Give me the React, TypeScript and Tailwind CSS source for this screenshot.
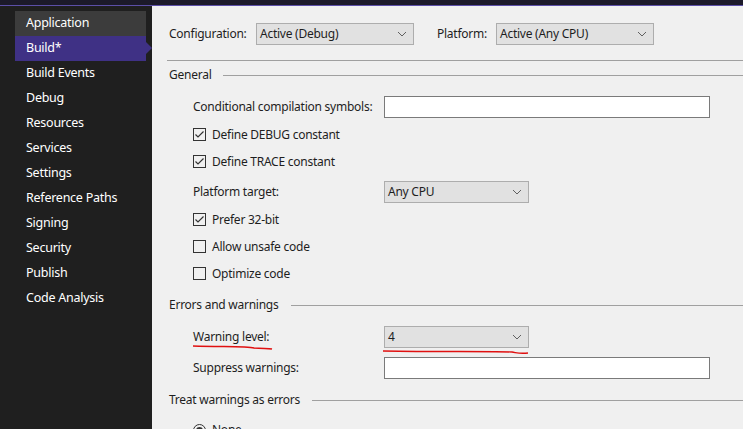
import React from "react";

const navItems = [
  "Application",
  "Build*",
  "Build Events",
  "Debug",
  "Resources",
  "Services",
  "Settings",
  "Reference Paths",
  "Signing",
  "Security",
  "Publish",
  "Code Analysis",
];

const Chevron = () => (
  <svg width="10" height="6" viewBox="0 0 10 6" className="shrink-0">
    <path d="M1 1 L5 5 L9 1" fill="none" stroke="#606060" strokeWidth="1" />
  </svg>
);

const Select = ({ value, width }: { value: string; width: string }) => (
  <div
    className={`flex h-[22px] items-center justify-between border border-[#adadad] bg-[#e1e1e1] pl-[3px] pr-[6px] ${width}`}
  >
    <span>{value}</span>
    <Chevron />
  </div>
);

const CheckBox = ({ checked, label }: { checked?: boolean; label: string }) => (
  <div className="flex h-[27px] items-center">
    <div className="flex h-[13px] w-[13px] items-center justify-center border border-[#333] bg-[#f0f0f0]">
      {checked && (
        <svg width="11" height="11" viewBox="0 0 11 11">
          <path d="M1.5 5.5 L4 8 L9.5 2.5" fill="none" stroke="#333" strokeWidth="1.2" />
        </svg>
      )}
    </div>
    <span className="ml-[6px]">{label}</span>
  </div>
);

const SectionHeader = ({ title }: { title: string }) => (
  <div className="flex h-[26px] items-center">
    <span>{title}</span>
    <div className="ml-[12px] h-px flex-1 bg-[#a0a0a0]" />
  </div>
);

export default function App() {
  return (
    <div
      className="flex h-[429px] w-[743px] flex-col overflow-hidden whitespace-nowrap text-[12px] tracking-[-0.25px]"
      style={{ fontFamily: '"Noto Sans", "Open Sans", sans-serif' }}
    >
      {/* top title strip */}
      <div className="h-[6px] shrink-0 border-b border-[#5c4fa8] bg-[#1c1a2a]" />
      <div className="flex flex-1">
        {/* sidebar */}
        <div className="w-[152px] shrink-0 bg-[#1f1f1f] pl-[15px] pt-[5px] text-[12.5px] text-white">
          {navItems.map((item, i) => (
            <div
              key={item}
              className={`relative flex h-[25px] w-[131px] items-center pl-[11px] ${
                i === 0 ? "bg-[#3c3c3c]" : i === 1 ? "bg-[#3f3185]" : ""
              }`}
            >
              {item}
              {i === 1 && (
                <div className="absolute right-[-6px] top-[6px] h-0 w-0 border-y-[6px] border-l-[6px] border-y-transparent border-l-[#3f3185]" />
              )}
            </div>
          ))}
        </div>

        {/* content */}
        <div className="relative flex-1 bg-[#f0f0f0] pl-[15px] text-[#1e1e1e]">
          <div className="mt-[17px] flex h-[22px] items-center pl-[2px]">
            <span className="w-[87px]">Configuration:</span>
            <Select value="Active (Debug)" width="w-[158px]" />
            <span className="ml-[23px] w-[59px]">Platform:</span>
            <Select value="Active (Any CPU)" width="w-[158px]" />
          </div>
          <div className="mt-[15px] h-px bg-[#a0a0a0]" />

          <div className="pl-[2px]">
            <div className="mt-[1px]">
              <SectionHeader title="General" />
            </div>

            <div className="pl-[24px]">
              <div className="mt-[8px] flex h-[22px] items-center">
                <span className="w-[191px]">Conditional compilation symbols:</span>
                <div className="h-[22px] w-[326px] border border-[#7a7a7a] bg-white" />
              </div>
              <div className="mt-[3px]">
                <CheckBox checked label="Define DEBUG constant" />
                <CheckBox checked label="Define TRACE constant" />
              </div>
              <div className="mt-[6px] flex h-[22px] items-center">
                <span className="w-[191px]">Platform target:</span>
                <Select value="Any CPU" width="w-[145px]" />
              </div>
              <div className="mt-[3px]">
                <CheckBox checked label="Prefer 32-bit" />
                <CheckBox label="Allow unsafe code" />
                <CheckBox label="Optimize code" />
              </div>
            </div>

            <div className="mt-[5px]">
              <SectionHeader title="Errors and warnings" />
            </div>

            <div className="pl-[24px]">
              <div className="mt-[8px] flex h-[22px] items-center">
                <span className="w-[191px]">Warning level:</span>
                <Select value="4" width="w-[145px]" />
              </div>
              <div className="mt-[9px] flex h-[22px] items-center">
                <span className="w-[191px]">Suppress warnings:</span>
                <div className="h-[22px] w-[326px] border border-[#7a7a7a] bg-white" />
              </div>
            </div>

            <div className="mt-[8px]">
              <SectionHeader title="Treat warnings as errors" />
            </div>

            <div className="mt-[8px] flex items-center pl-[24px]">
              <div className="flex h-[13px] w-[13px] items-center justify-center rounded-full border border-[#333]">
                <div className="h-[7px] w-[7px] rounded-full bg-[#333]" />
              </div>
              <span className="ml-[6px]">None</span>
            </div>
          </div>

          {/* red pen marks */}
          <svg
            className="pointer-events-none absolute left-0 top-0"
            width="591"
            height="423"
            viewBox="0 0 591 423"
          >
            <path
              d="M41 340 C70 341 95 340 102 342 C110 343 116 342 120 343"
              fill="none"
              stroke="#e01010"
              strokeWidth="1.4"
            />
            <path
              d="M231 345 C290 346 330 345 360 346 C366 347 368 348 376 347"
              fill="none"
              stroke="#e01010"
              strokeWidth="1.4"
            />
          </svg>
        </div>
      </div>
    </div>
  );
}
